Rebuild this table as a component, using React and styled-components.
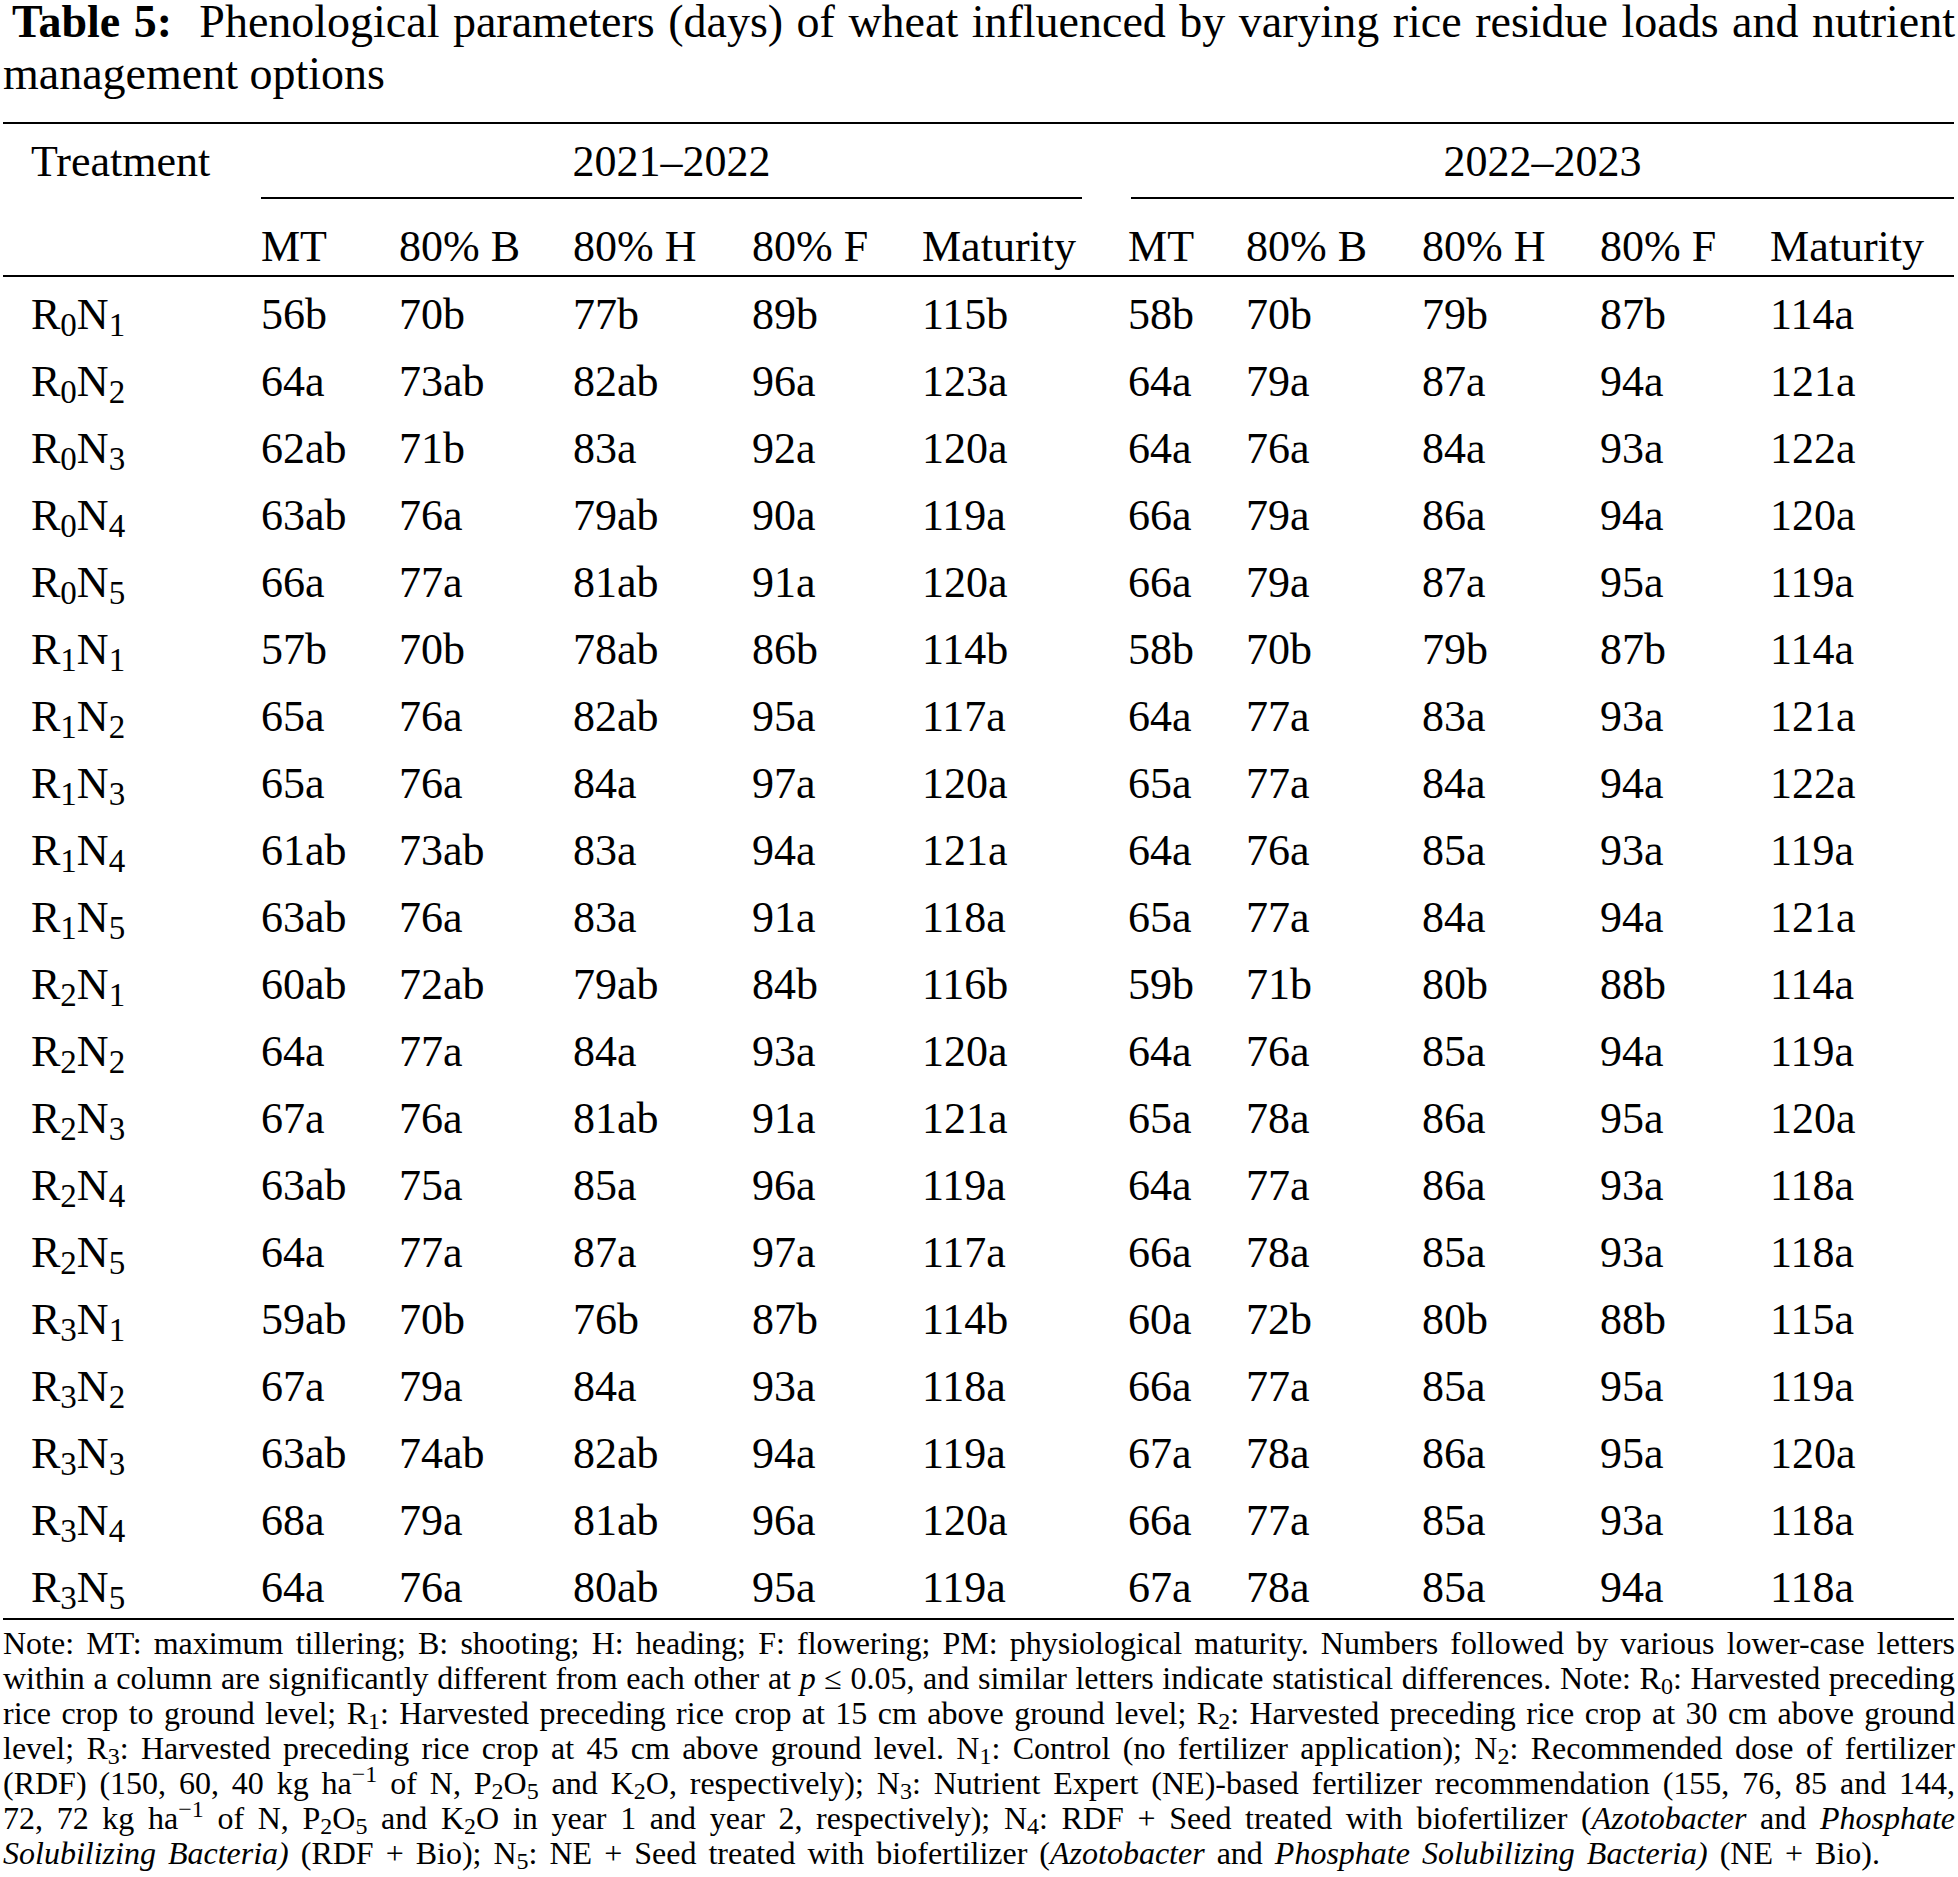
import React from 'react';
import styled, { createGlobalStyle } from 'styled-components';

const GlobalStyle = createGlobalStyle`
  html, body {
    margin: 0;
    padding: 0;
    background: #fff;
  }
  body {
    font-family: "Liberation Serif", "Times New Roman", serif;
    color: #000;
  }
`;

const groups = ['2021–2022', '2022–2023'];
const stages = ['MT', '80% B', '80% H', '80% F', 'Maturity'];
const colWidths = [258, 138, 174, 179, 170, 206, 118, 176, 178, 170, 184];

const rows = [
  [0, 1, '56b 70b 77b 89b 115b 58b 70b 79b 87b 114a'],
  [0, 2, '64a 73ab 82ab 96a 123a 64a 79a 87a 94a 121a'],
  [0, 3, '62ab 71b 83a 92a 120a 64a 76a 84a 93a 122a'],
  [0, 4, '63ab 76a 79ab 90a 119a 66a 79a 86a 94a 120a'],
  [0, 5, '66a 77a 81ab 91a 120a 66a 79a 87a 95a 119a'],
  [1, 1, '57b 70b 78ab 86b 114b 58b 70b 79b 87b 114a'],
  [1, 2, '65a 76a 82ab 95a 117a 64a 77a 83a 93a 121a'],
  [1, 3, '65a 76a 84a 97a 120a 65a 77a 84a 94a 122a'],
  [1, 4, '61ab 73ab 83a 94a 121a 64a 76a 85a 93a 119a'],
  [1, 5, '63ab 76a 83a 91a 118a 65a 77a 84a 94a 121a'],
  [2, 1, '60ab 72ab 79ab 84b 116b 59b 71b 80b 88b 114a'],
  [2, 2, '64a 77a 84a 93a 120a 64a 76a 85a 94a 119a'],
  [2, 3, '67a 76a 81ab 91a 121a 65a 78a 86a 95a 120a'],
  [2, 4, '63ab 75a 85a 96a 119a 64a 77a 86a 93a 118a'],
  [2, 5, '64a 77a 87a 97a 117a 66a 78a 85a 93a 118a'],
  [3, 1, '59ab 70b 76b 87b 114b 60a 72b 80b 88b 115a'],
  [3, 2, '67a 79a 84a 93a 118a 66a 77a 85a 95a 119a'],
  [3, 3, '63ab 74ab 82ab 94a 119a 67a 78a 86a 95a 120a'],
  [3, 4, '68a 79a 81ab 96a 120a 66a 77a 85a 93a 118a'],
  [3, 5, '64a 76a 80ab 95a 119a 67a 78a 85a 94a 118a'],
];

const Page = styled.div`
  width: 1952px;
  margin-left: 3px;
`;

const Caption = styled.p`
  margin: -4px 0 22px;
  font-size: 46px;
  line-height: 52px;
  text-align: justify;
  text-indent: 9px;

  b {
    font-weight: bold;
    margin-right: 0.3em;
  }
`;

const Table = styled.table`
  width: 1951px;
  border-collapse: collapse;
  table-layout: fixed;
  font-size: 44px;
`;

const Col = styled.col`
  width: ${(p) => p.$w}px;
`;

const TopCell = styled.th`
  border-top: 2px solid #000;
  font-weight: normal;
  text-align: left;
  vertical-align: bottom;
  line-height: 44px;
  padding: 0 0 15px 28px;
  white-space: nowrap;
`;

const YearCell = styled.th`
  border-top: 2px solid #000;
  font-weight: normal;
  vertical-align: bottom;
  padding: 16px ${(p) => p.$right}px 0 ${(p) => p.$left}px;
`;

const YearLabel = styled.div`
  line-height: 44px;
  text-align: center;
  padding-bottom: 13px;
  border-bottom: 2px solid #000;
`;

const StageCell = styled.th`
  font-weight: normal;
  text-align: left;
  line-height: 44px;
  padding: 26px 0 6px ${(p) => (p.$first ? 28 : 0)}px;
  border-bottom: 2px solid #000;
  white-space: nowrap;
`;

const Td = styled.td`
  line-height: 44px;
  padding: 11px 0 12px ${(p) => (p.$first ? 28 : 0)}px;
  white-space: nowrap;

  tr:first-child > & {
    padding-top: 16px;
  }
  tr:last-child > & {
    padding-bottom: 8px;
    border-bottom: 2px solid #000;
  }
`;

const Sub = styled.sub`
  font-size: 0.75em;
  vertical-align: -0.22em;
  line-height: 0;
`;

const Sup = styled.sup`
  font-size: 0.75em;
  vertical-align: 0.5em;
  line-height: 0;
`;

const Note = styled.div`
  margin-top: 6px;
  font-size: 32px;
  line-height: 35px;
`;

const NoteLine = styled.div`
  text-align: justify;
  text-align-last: ${(p) => (p.$last ? 'left' : 'justify')};
  word-spacing: ${(p) => p.$spread || 0}px;
`;

export default function App() {
  return (
    <Page>
      <GlobalStyle />
      <Caption>
        <b>Table 5:</b> Phenological parameters (days) of wheat influenced by varying rice
        residue loads and nutrient management options
      </Caption>

      <Table>
        <colgroup>
          {colWidths.map((w, i) => (
            <Col key={i} $w={w} />
          ))}
        </colgroup>
        <thead>
          <tr>
            <TopCell>Treatment</TopCell>
            <YearCell colSpan={5} $left={0} $right={46}>
              <YearLabel>{groups[0]}</YearLabel>
            </YearCell>
            <YearCell colSpan={5} $left={3} $right={0}>
              <YearLabel>{groups[1]}</YearLabel>
            </YearCell>
          </tr>
          <tr>
            <StageCell $first />
            {groups.map((g) =>
              stages.map((s) => <StageCell key={g + s}>{s}</StageCell>)
            )}
          </tr>
        </thead>
        <tbody>
          {rows.map(([r, n, vals]) => (
            <tr key={`${r}${n}`}>
              <Td $first>
                R<Sub>{r}</Sub>N<Sub>{n}</Sub>
              </Td>
              {vals.split(' ').map((v, i) => (
                <Td key={i}>{v}</Td>
              ))}
            </tr>
          ))}
        </tbody>
      </Table>

      <Note>
        <NoteLine>
          Note: MT: maximum tillering; B: shooting; H: heading; F: flowering; PM: physiological
          maturity. Numbers followed by various lower-case letters
        </NoteLine>
        <NoteLine>
          within a column are significantly different from each other at <i>p</i> ≤ 0.05, and
          similar letters indicate statistical differences. Note: R<Sub>0</Sub>: Harvested
          preceding
        </NoteLine>
        <NoteLine>
          rice crop to ground level; R<Sub>1</Sub>: Harvested preceding rice crop at 15 cm above
          ground level; R<Sub>2</Sub>: Harvested preceding rice crop at 30 cm above ground
        </NoteLine>
        <NoteLine>
          level; R<Sub>3</Sub>: Harvested preceding rice crop at 45 cm above ground level.
          N<Sub>1</Sub>: Control (no fertilizer application); N<Sub>2</Sub>: Recommended dose of
          fertilizer
        </NoteLine>
        <NoteLine>
          (RDF) (150, 60, 40 kg ha<Sup>−1</Sup> of N, P<Sub>2</Sub>O<Sub>5</Sub> and
          K<Sub>2</Sub>O, respectively); N<Sub>3</Sub>: Nutrient Expert (NE)-based fertilizer
          recommendation (155, 76, 85 and 144,
        </NoteLine>
        <NoteLine>
          72, 72 kg ha<Sup>−1</Sup> of N, P<Sub>2</Sub>O<Sub>5</Sub> and K<Sub>2</Sub>O in year 1
          and year 2, respectively); N<Sub>4</Sub>: RDF + Seed treated with biofertilizer (
          <i>Azotobacter</i> and <i>Phosphate</i>
        </NoteLine>
        <NoteLine $last $spread={4}>
          <i>Solubilizing Bacteria)</i> (RDF + Bio); N<Sub>5</Sub>: NE + Seed treated with
          biofertilizer (<i>Azotobacter</i> and <i>Phosphate Solubilizing Bacteria)</i> (NE +
          Bio).
        </NoteLine>
      </Note>
    </Page>
  );
}
